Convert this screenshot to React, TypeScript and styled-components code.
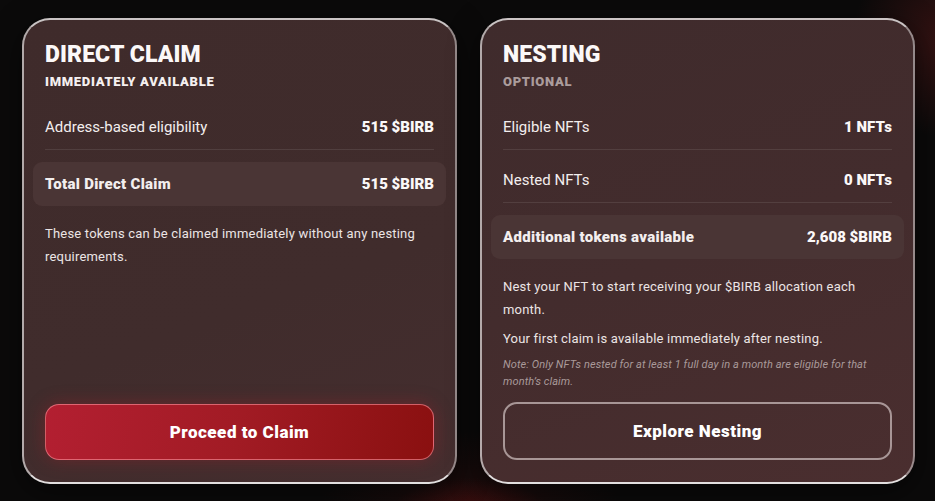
import React from "react";
import styled, { createGlobalStyle, css } from "styled-components";

const Global = createGlobalStyle`
  html, body { margin: 0; padding: 0; }
  body {
    background: #0b0a0a;
    font-family: Roboto, "Liberation Sans", sans-serif;
    color: #f6f1f1;
  }
  * { box-sizing: border-box; }
`;

const Page = styled.div`
  width: 935px;
  height: 501px;
  padding: 18px 20px 18px 22px;
  display: grid;
  grid-template-columns: 435px 435px;
  gap: 23px;
  background:
    radial-gradient(ellipse 120px 60px at 470px 520px, rgba(120, 20, 20, 0.45), transparent 70%),
    radial-gradient(ellipse 140px 140px at 950px 40px, rgba(90, 25, 25, 0.55), transparent 70%),
    radial-gradient(ellipse 200px 100px at 470px 505px, rgba(70, 15, 15, 0.35), transparent 75%),
    #0b0a0a;
  overflow: hidden;
`;

const Card = styled.section<{ $tint?: boolean }>`
  display: flex;
  flex-direction: column;
  padding: 21px 21px 22px;
  border-radius: 28px;
  border: 2px solid;
  border-color: rgba(255, 255, 255, 0.72) rgba(255, 255, 255, 0.45)
    rgba(255, 255, 255, 0.85) rgba(255, 255, 255, 0.6);
  background: ${(p) =>
    p.$tint
      ? "linear-gradient(160deg, #3f2b2c 0%, #432c2d 50%, #4a2e2f 100%)"
      : "linear-gradient(160deg, #3f2b2b 0%, #402c2c 60%, #452e2f 100%)"};
  box-shadow: 0 8px 30px rgba(0, 0, 0, 0.5);
`;

const Title = styled.h2`
  margin: 0;
  font-size: 23px;
  line-height: 28px;
  font-weight: 900;
  letter-spacing: 0.1px;
  color: #fbf8f8;
`;

const Subtitle = styled.div<{ $muted?: boolean }>`
  margin-top: 5px;
  font-size: 13px;
  line-height: 16px;
  font-weight: 900;
  letter-spacing: 0.7px;
  color: ${(p) => (p.$muted ? "#ab9c9c" : "#f5f0f0")};
`;

const Rows = styled.div`
  margin-top: 15px;
  display: flex;
  flex-direction: column;
  gap: 8px;
`;

const Row = styled.div<{ $total?: boolean }>`
  display: flex;
  justify-content: space-between;
  align-items: center;
  font-size: 15px;
  line-height: 20px;
  padding: 12px 0;
  border-bottom: 1px solid rgba(255, 255, 255, 0.09);
  ${(p) =>
    p.$total &&
    css`
      margin: 4px -12px 0;
      padding: 12px 12px;
      border-bottom: none;
      border-radius: 9px;
      background: #4a3535;
      & > span:first-child {
        font-weight: 900;
        letter-spacing: 0.3px;
      }
    `}
`;

const Label = styled.span`
  color: #f3eeee;
`;

const Value = styled.span`
  font-weight: 900;
  color: #fbf8f8;
`;

const Para = styled.p<{ $first?: boolean }>`
  margin: ${(p) => (p.$first ? "16px" : "6px")} 0 0;
  font-size: 13px;
  line-height: 23px;
  letter-spacing: 0.2px;
  color: #ece5e5;
`;

const Note = styled.p`
  margin: 6px 0 12px;
  font-size: 11px;
  line-height: 17px;
  font-style: italic;
  letter-spacing: 0.1px;
  color: #a99a9a;
`;

const Button = styled.button<{ $variant: "primary" | "outline" }>`
  margin-top: auto;
  width: 100%;
  border-radius: 14px;
  font-family: Roboto, "Liberation Sans", sans-serif;
  font-size: 17px;
  font-weight: 900;
  letter-spacing: 0.5px;
  color: #ffffff;
  cursor: pointer;
  ${(p) =>
    p.$variant === "primary"
      ? css`
          height: 56px;
          border: 1.5px solid rgba(255, 150, 160, 0.6);
          background: linear-gradient(100deg, #b31f31 0%, #a11b24 50%, #8a1010 100%);
          box-shadow: 0 0 18px rgba(180, 30, 40, 0.35);
        `
      : css`
          height: 58px;
          border: 2px solid rgba(210, 195, 195, 0.7);
          background: transparent;
        `}
`;

export default function App() {
  return (
    <>
      <Global />
      <Page>
        <Card>
          <Title>DIRECT CLAIM</Title>
          <Subtitle>IMMEDIATELY AVAILABLE</Subtitle>
          <Rows>
            <Row>
              <Label>Address-based eligibility</Label>
              <Value>515 $BIRB</Value>
            </Row>
            <Row $total>
              <Label>Total Direct Claim</Label>
              <Value>515 $BIRB</Value>
            </Row>
          </Rows>
          <Para $first>
            These tokens can be claimed immediately without any nesting requirements.
          </Para>
          <Button $variant="primary">Proceed to Claim</Button>
        </Card>
        <Card $tint>
          <Title>NESTING</Title>
          <Subtitle $muted>OPTIONAL</Subtitle>
          <Rows>
            <Row>
              <Label>Eligible NFTs</Label>
              <Value>1 NFTs</Value>
            </Row>
            <Row>
              <Label>Nested NFTs</Label>
              <Value>0 NFTs</Value>
            </Row>
            <Row $total>
              <Label>Additional tokens available</Label>
              <Value>2,608 $BIRB</Value>
            </Row>
          </Rows>
          <Para $first>
            Nest your NFT to start receiving your $BIRB allocation each month.
          </Para>
          <Para>Your first claim is available immediately after nesting.</Para>
          <Note>
            Note: Only NFTs nested for at least 1 full day in a month are eligible for that
            month’s claim.
          </Note>
          <Button $variant="outline">Explore Nesting</Button>
        </Card>
      </Page>
    </>
  );
}
